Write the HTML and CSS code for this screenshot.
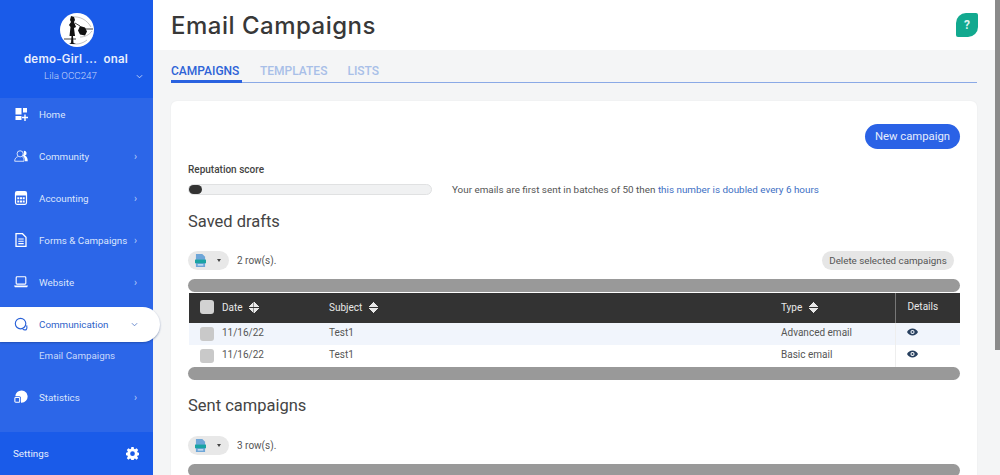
FILE: index.html
```html
<!DOCTYPE html>
<html lang="en">
<head>
<meta charset="utf-8">
<title>Email Campaigns</title>
<link rel="stylesheet" href="styles.css">
</head>
<body>
<div class="app">
  <aside class="sidebar">
    <div class="org">
      <svg class="logo" viewBox="0 0 34 34" width="34" height="34">
        <circle cx="17" cy="17" r="17" fill="#fff"/>
        <g fill="none" stroke="#9a9a9a" stroke-width=".6"><path d="M12 4c8-1 15 3 19 10M20 24c5 0 9-2 12-6M10 30c6 2 12 1 17-3"/></g>
        <path fill="#111" d="M11 3l3 1 1 3-1 2 2 5-2 1 1 8-2 0 .5 7 2.500 1H9l2-1 .5-7-2 0 1-9-1.500-2 2-3-1-2z"/>
        <path fill="#111" d="M20 13l5 1.500 2 4-2 4-5-1-2-4z"/>
        <path stroke="#111" stroke-width=".8" d="M15 10l5 3M4 26h12M24 16h9"/>
      </svg>
      <div class="org-name">demo-Girl ...&nbsp; onal</div>
      <div class="org-user">Lila OCC247
        <svg class="org-caret" viewBox="0 0 8 5" width="7" height="5"><path d="M1 1l3 3 3-3" fill="none" stroke="#cfdcfb" stroke-width="1"/></svg>
      </div>
    </div>
    <nav class="menu">
      <a class="item">
        <svg class="ico" viewBox="0 0 14 14"><path fill="#fff" d="M1.500 1h6v6.500h-6zM9 1h4v4.500H9zM1.500 9h6v4h-6zM10.300 7.500h1.400v2.300H14v1.400h-2.300V14h-1.400v-2.800H8V9.800h2.300z"/></svg>
        <span class="label">Home</span>
      </a>
      <a class="item">
        <svg class="ico" viewBox="0 0 16 14"><g fill="none" stroke="#fff" stroke-width=".9"><circle cx="7" cy="4.500" r="3.500"/><path d="M.800 13c0-3 1.500-4.500 3.500-5.200M9.500 7.800c1.500.7 2 2.200 2 5.200H.800"/></g><path fill="#fff" d="M11.300 1a3 3 0 0 1 1.200 5.800c2 .5 3.200 2.500 3.200 6.200h-3c0-3-1-5-2.700-6 1-1 1.500-3.500 1.300-6z"/></svg>
        <span class="label">Community</span>
        <span class="chev">›</span>
      </a>
      <a class="item">
        <svg class="ico" viewBox="0 0 14 14"><rect x="1.500" y=".700" width="11" height="12.600" rx="1.500" fill="none" stroke="#fff" stroke-width="1.200"/><path fill="#fff" d="M2 1h10v3.600H2zM3.300 6.200h2v2h-2zM6 6.200h2v2H6zM8.700 6.200h2v2h-2zM3.300 9.400h2v2h-2zM6 9.400h2v2H6zM8.700 9.400h2v2h-2z"/></svg>
        <span class="label">Accounting</span>
        <span class="chev">›</span>
      </a>
      <a class="item">
        <svg class="ico" viewBox="0 0 14 14"><path d="M2 .700h6.500L12 4.200v9.100H2z" fill="none" stroke="#fff" stroke-width="1.300"/><path d="M4.300 6h5.400M4.300 8.300h5.400M4.300 10.600h5.400" stroke="#fff" stroke-width="1.100"/></svg>
        <span class="label">Forms &amp; Campaigns</span>
        <span class="chev">›</span>
      </a>
      <a class="item">
        <svg class="ico" viewBox="0 0 16 14"><rect x="2.500" y="1" width="11" height="8.500" rx="1" fill="none" stroke="#fff" stroke-width="1.300"/><path fill="#fff" d="M0 11h16l-1 2H1z"/></svg>
        <span class="label">Website</span>
        <span class="chev">›</span>
      </a>
      <a class="item active">
        <svg class="ico" viewBox="0 0 16 16"><g fill="none" stroke="#2a62d8" stroke-width="1.300"><circle cx="7.500" cy="7.500" r="6"/><path d="M14.500 9.500c.5 2 .3 3.800-.5 5-1.500.5-3 .2-4-.5"/></g></svg>
        <span class="label">Communication</span>
        <svg class="chev-down" viewBox="0 0 8 5" width="7" height="5"><path d="M1 1l3 3 3-3" fill="none" stroke="#5a7fc9" stroke-width="1"/></svg>
      </a>
      <a class="sub">Email Campaigns</a>
      <a class="item item-stats">
        <svg class="ico" viewBox="0 0 16 16"><path fill="#fff" d="M6 1a7 7 0 1 1 2 13.500V9a2 2 0 0 0-2-2H1.500A7 7 0 0 1 6 1z"/><rect x="1" y="8.500" width="5.500" height="5.500" rx="1" fill="none" stroke="#fff" stroke-width="1.200"/></svg>
        <span class="label">Statistics</span>
        <span class="chev">›</span>
      </a>
    </nav>
    <div class="settings">
      <span>Settings</span>
      <svg viewBox="0 0 16 16" width="13" height="13"><path fill="#fff" fill-rule="evenodd" d="M6.600 0h2.800l.4 2.200 1.300.6L13 1.600l2 2-1.300 1.900.6 1.300 2.200.4v2.800l-2.200.4-.6 1.300 1.300 1.900-2 2-1.900-1.300-1.300.6-.4 2.200H6.600l-.4-2.200-1.300-.6L3 15.700l-2-2 1.300-1.900-.6-1.300L-.5 10V7.200l2.200-.4.600-1.300L1 3.600l2-2 1.900 1.200 1.300-.6zM8 5.300a2.900 2.900 0 1 0 0 5.800 2.900 2.900 0 0 0 0-5.800z"/></svg>
    </div>
  </aside>
  <div class="main">
    <header class="topbar">
      <h1 class="title">Email Campaigns</h1>
      <div class="help">?</div>
    </header>
    <div class="content">
      <div class="tabs">
        <a class="tab tab-active">CAMPAIGNS</a>
        <a class="tab">TEMPLATES</a>
        <a class="tab">LISTS</a>
      </div>
      <section class="card">
        <div class="card-top"><button class="btn-primary">New campaign</button></div>
        <div class="rep-label">Reputation score</div>
        <div class="rep-row">
          <div class="rep-bar"><div class="rep-fill"></div></div>
          <p class="rep-text">Your emails are first sent in batches of 50 then <span class="link">this number is doubled every 6 hours</span></p>
        </div>
        <h2 class="section-title">Saved drafts</h2>
        <div class="tools">
          <div class="export">
            <svg viewBox="0 0 12 14" width="11" height="13"><path fill="#6ea6d8" d="M1 0h7l3 3v11H1z"/><path fill="#1aa3a3" d="M0 6h12v4H0z"/><path fill="#cfe3f5" d="M3 11h6v1.500H3z"/></svg>
            <span class="caret"></span>
          </div>
          <span class="rows">2 row(s).</span>
          <button class="btn-grey">Delete selected campaigns</button>
        </div>
        <div class="hscroll"></div>
        <table class="grid">
          <colgroup><col class="c-check"><col class="c-date"><col class="c-subject"><col class="c-type"><col class="c-details"></colgroup>
          <thead>
            <tr>
              <th><span class="check check-head"></span></th>
              <th>Date <span class="sort"></span></th>
              <th>Subject <span class="sort"></span></th>
              <th>Type <span class="sort"></span></th>
              <th class="details">Details</th>
            </tr>
          </thead>
          <tbody>
            <tr class="odd">
              <td class="cell-box"><span class="check"></span></td><td>11/16/22</td><td>Test1</td><td>Advanced email</td>
              <td class="details"><svg class="eye" viewBox="0 0 16 10" width="11" height="8"><path fill="#28405f" fill-rule="evenodd" d="M8 0c3.500 0 6.300 2 8 5-1.700 3-4.500 5-8 5S1.700 8 0 5c1.700-3 4.500-5 8-5zm0 2a3 3 0 1 0 0 6 3 3 0 0 0 0-6z"/><circle cx="8" cy="5" r="1.500" fill="#28405f"/></svg></td>
            </tr>
            <tr>
              <td class="cell-box"><span class="check"></span></td><td>11/16/22</td><td>Test1</td><td>Basic email</td>
              <td class="details"><svg class="eye" viewBox="0 0 16 10" width="11" height="8"><path fill="#28405f" fill-rule="evenodd" d="M8 0c3.500 0 6.300 2 8 5-1.700 3-4.500 5-8 5S1.700 8 0 5c1.700-3 4.500-5 8-5zm0 2a3 3 0 1 0 0 6 3 3 0 0 0 0-6z"/><circle cx="8" cy="5" r="1.500" fill="#28405f"/></svg></td>
            </tr>
          </tbody>
        </table>
        <div class="hscroll"></div>
        <h2 class="section-title section-sent">Sent campaigns</h2>
        <div class="tools">
          <div class="export">
            <svg viewBox="0 0 12 14" width="11" height="13"><path fill="#6ea6d8" d="M1 0h7l3 3v11H1z"/><path fill="#1aa3a3" d="M0 6h12v4H0z"/><path fill="#cfe3f5" d="M3 11h6v1.500H3z"/></svg>
            <span class="caret"></span>
          </div>
          <span class="rows">3 row(s).</span>
        </div>
        <div class="hscroll"></div>
      </section>
    </div>
  </div>
  <div class="vscroll"><div class="vthumb"></div></div>
</div>
</body>
</html>
```
FILE: styles.css
```css
* { box-sizing: border-box; }
html, body { margin: 0; height: 100%; overflow: hidden; }
body { font-family: Roboto, "Liberation Sans", sans-serif; color: #444; background: #f4f5f6; }
.app { display: flex; height: 475px; overflow: hidden; }

.sidebar { width: 153px; flex: none; display: flex; flex-direction: column; background: #2c66e8; color: #fff; position: relative; z-index: 2; }
.org { height: 98px; flex: none; background: #1a5be9; display: flex; flex-direction: column; align-items: center; padding-top: 13px; }
.logo { display: block; }
.org-name { font-family: Inter, Roboto, sans-serif; font-weight: 600; font-size: 11.500px; line-height: 14px; margin: 5px 1px 0 0; letter-spacing: .25px; color: #e9effd; white-space: nowrap; }
.org-user { width: 100%; display: flex; justify-content: center; padding-right: 12px; font-size: 9.800px; font-weight: 300; line-height: 12px; margin-top: 4px; color: #c6d6fa; position: relative; }
.org-caret { position: absolute; right: 10px; top: 4px; }

.menu { flex: 1; display: flex; flex-direction: column; margin-top: -5px; }
.item { height: 42px; display: flex; align-items: center; padding-left: 14px; font-size: 9.800px; color: #dbe5fc; }
.ico { width: 14px; height: 14px; flex: none; margin-right: 11px; }
.label { flex: 1; white-space: nowrap; }
.chev { width: 19px; flex: none; font-size: 10px; color: #b8cdf9; }
.chev-down { flex: none; margin-right: 22px; }
.item.active { width: 160px; height: 35px; margin: 3.500px 0; background: #fff; border-radius: 0 18px 18px 0; color: #2f63c9; box-shadow: 0 1px 2px rgba(20, 50, 120, .45); }
.sub { height: 23px; padding-left: 39px; font-size: 9.800px; line-height: 21px; color: #c8d8fb; white-space: nowrap; }
.item-stats { margin-top: 8px; }
.settings { height: 43px; flex: none; background: #1a5be9; display: flex; align-items: center; justify-content: space-between; padding: 0 14px 0 13px; font-size: 9.800px; color: #e6edfd; }

.main { flex: 1; min-width: 0; display: flex; flex-direction: column; }
.topbar { height: 50px; flex: none; background: #fff; display: flex; align-items: center; justify-content: space-between; padding: 0 22px 0 18px; }
.title { margin: 0; font-family: Inter, Roboto, sans-serif; font-size: 24px; font-weight: 500; letter-spacing: .5px; color: #383838; }
.help { width: 22px; height: 24px; background: #12a98f; color: #dff3ef; border-radius: 10px 2px 10px 2px; font: 700 12px/24px Roboto, sans-serif; text-align: center; }

.content { flex: 1; min-height: 0; padding: 0 18px 0 18px; width: 842px; }
.tabs { height: 33px; display: flex; gap: 20px; border-bottom: 1px solid #8aa9e6; }
.tab { font-size: 12px; font-weight: 500; line-height: 42px; height: 33px; color: #a8bfe8; }
.tab-active { color: #2e63d6; border-bottom: 3px solid #2a62e0; width: 71px; margin-right: -2px; }

.card { margin-top: 18px; height: 500px; background: #fff; border-radius: 6px; padding: 0 17px; box-shadow: 0 0 2px rgba(0, 0, 0, .06); }
.card-top { display: flex; justify-content: flex-end; padding-top: 23px; height: 63px; }
.btn-primary { width: 95px; height: 25px; border: 0; border-radius: 13px; background: #2a62e6; color: #e6edfd; font: 400 11.300px Roboto, sans-serif; padding: 0; }
.rep-label { font-size: 10px; font-weight: 500; line-height: 12px; color: #444; }
.rep-row { display: flex; align-items: center; margin-top: 7px; height: 12px; gap: 20px; }
.rep-bar { width: 244px; height: 11px; border: 1px solid #e0e1e2; border-radius: 6px; background: #f0f1f2; }
.rep-fill { width: 13px; height: 9px; border-radius: 5px; background: #333; }
.rep-text { margin: 0; font-size: 9.870px; color: #555; white-space: nowrap; }
.link { color: #3d6fc4; }
.section-title { margin: 16px 0 0; font-size: 16.500px; line-height: 22px; font-weight: 400; color: #444; }
.section-sent { margin-top: 15px; }
.tools { display: flex; align-items: center; height: 19px; margin-top: 18px; }
.section-sent + .tools { margin-top: 19px; }
.export { width: 41px; height: 19px; border-radius: 10px; background: #e8e8e8; display: flex; align-items: center; padding-left: 7px; gap: 11px; }
.caret { width: 0; height: 0; border: 2px solid transparent; border-top: 3px solid #444; border-bottom: 0; }
.rows { margin-left: 8px; font-size: 10px; color: #555; }
.btn-grey { margin-left: auto; margin-right: 6px; width: 132px; height: 19px; border: 0; border-radius: 10px; background: #e6e6e6; color: #555; font: 400 9.800px Roboto, sans-serif; padding: 0; }
.hscroll { height: 13px; border-radius: 7px; background: #999; margin-top: 9px; }
.grid { width: 771px; margin: 1px 0 0 1px; border-collapse: collapse; table-layout: fixed; font-size: 10px; }
.grid + .hscroll { margin-top: 0; }
.c-check { width: 33px; }
.c-date { width: 107px; }
.c-subject { width: 452px; }
.c-type { width: 114px; }
.grid th { height: 30px; background: #333; color: #e8e8e8; font-weight: 400; text-align: left; padding: 0 0 2px; }
.grid td { height: 22px; padding: 0 0 4px; color: #555; }
.grid td.cell-box { padding: 0; }
.grid tr.odd td { background: #f1f5fc; }
.grid th.details { border-left: 1px solid #777; padding: 0 0 4px 12px; }
.grid td.details { border-left: 1px solid #eee; padding: 0 0 4px 11px; }
.check { display: block; width: 14px; height: 14px; margin-left: 11px; border-radius: 3px; background: #c9c9c9; }
.check-head { background: #d2d2d2; }
.sort { display: inline-block; width: 11px; height: 11px; margin-left: 3px; vertical-align: -2px; background: linear-gradient(135deg, transparent 50%, #e8e8e8 50%) 0 0 / 5.500px 5px no-repeat, linear-gradient(225deg, transparent 50%, #e8e8e8 50%) 5.500px 0 / 5.500px 5px no-repeat, linear-gradient(45deg, transparent 50%, #e8e8e8 50%) 0 6px / 5.500px 5px no-repeat, linear-gradient(315deg, transparent 50%, #e8e8e8 50%) 5.500px 6px / 5.500px 5px no-repeat; }
.eye { display: block; }

.vscroll { width: 5px; flex: none; background: #f4f5f6; position: absolute; right: 0; top: 0; height: 475px; }
.vthumb { height: 350px; background: #8a8a8a; }
```
